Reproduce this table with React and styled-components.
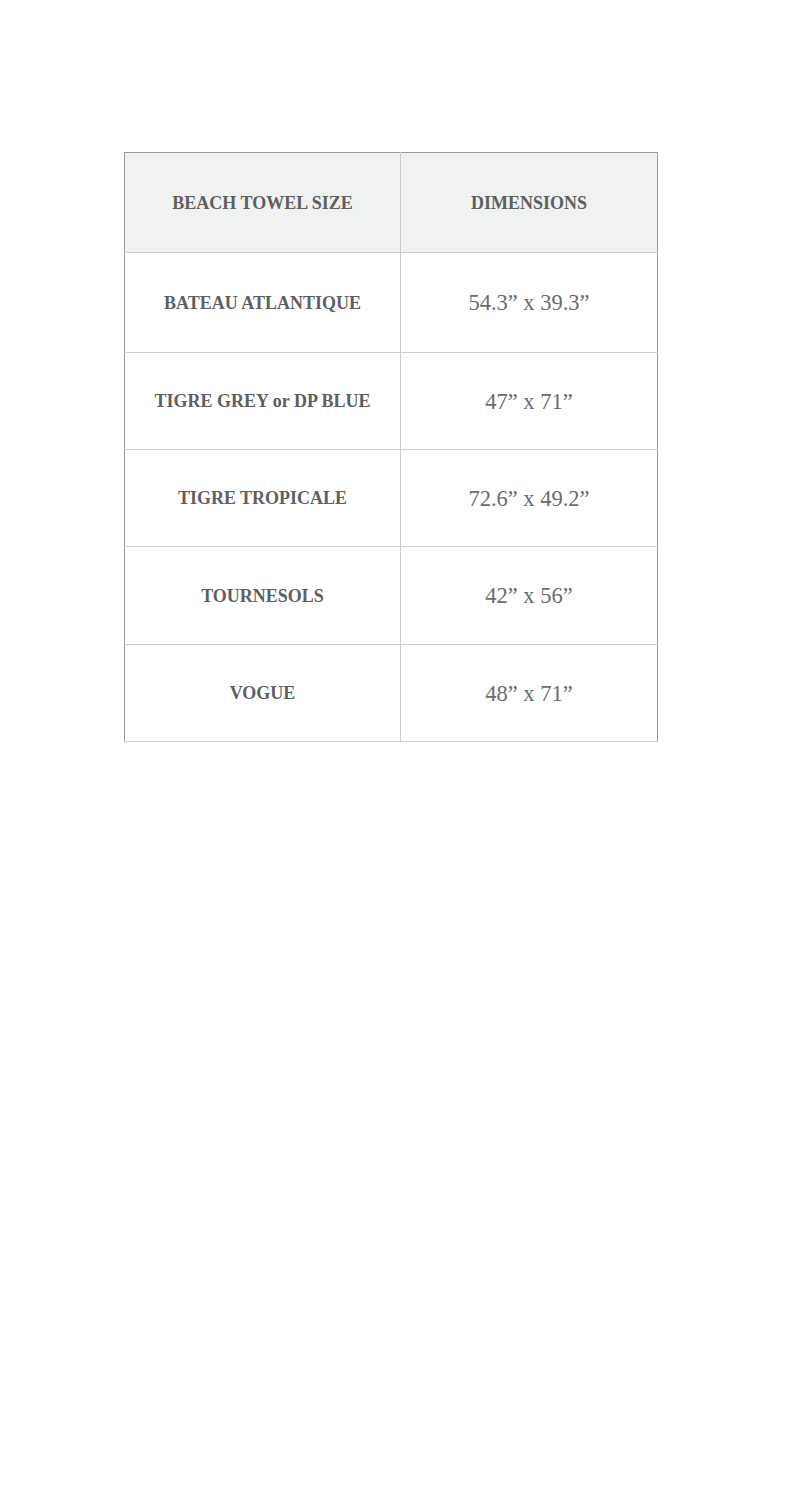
import React from "react";
import styled, { createGlobalStyle } from "styled-components";

const GlobalStyle = createGlobalStyle`
    html, body {
        margin: 0;
        padding: 0;
        background: #fff;
    }
    body {
        font-family: "Liberation Serif", "Times New Roman", serif;
    }
`;

const rows = [
    { name: "BATEAU ATLANTIQUE", size: "54.3\u201d x 39.3\u201d", height: 100 },
    { name: "TIGRE GREY or DP BLUE", size: "47\u201d x 71\u201d", height: 97 },
    { name: "TIGRE TROPICALE", size: "72.6\u201d x 49.2\u201d", height: 97 },
    { name: "TOURNESOLS", size: "42\u201d x 56\u201d", height: 98 },
    { name: "VOGUE", size: "48\u201d x 71\u201d", height: 97 },
];

const App = () => {
    return (
        <Page>
            <GlobalStyle />
            <SizeTable>
                <thead>
                    <HeadRow>
                        <HeadCell>BEACH TOWEL SIZE</HeadCell>
                        <HeadCell>DIMENSIONS</HeadCell>
                    </HeadRow>
                </thead>
                <tbody>
                    {rows.map((row) => (
                        <BodyRow key={row.name} style={{ height: row.height }}>
                            <NameCell>{row.name}</NameCell>
                            <SizeCell>{row.size}</SizeCell>
                        </BodyRow>
                    ))}
                </tbody>
            </SizeTable>
        </Page>
    );
};

const Page = styled.div`
    width: 800px;
    min-height: 1500px;
    padding: 152px 0 0 124px;
    box-sizing: border-box;
`;

const SizeTable = styled.table`
    width: 534px;
    border-collapse: collapse;
    table-layout: fixed;
`;

const HeadRow = styled.tr`
    height: 100px;
    background: #f0f2f1;
`;

const BodyRow = styled.tr`
    background: #fff;
`;

const cellBase = `
    border: 1px solid #cccccc;
    text-align: center;
    vertical-align: middle;
    padding: 1px 10px 0;
    color: #5f5f5f;

    &:first-child {
        border-left-color: #999999;
    }
    &:last-child {
        border-right-color: #999999;
    }
`;

const HeadCell = styled.th`
    ${cellBase}
    border-top-color: #999999;
    font-size: 18px;
    font-weight: bold;

    &:first-child {
        width: 255px;
    }
`;

const NameCell = styled.td`
    ${cellBase}
    font-size: 18px;
    font-weight: bold;
`;

const SizeCell = styled.td`
    ${cellBase}
    color: #6b6b6b;
    font-size: 22.5px;
    font-weight: normal;
`;

export default App;
